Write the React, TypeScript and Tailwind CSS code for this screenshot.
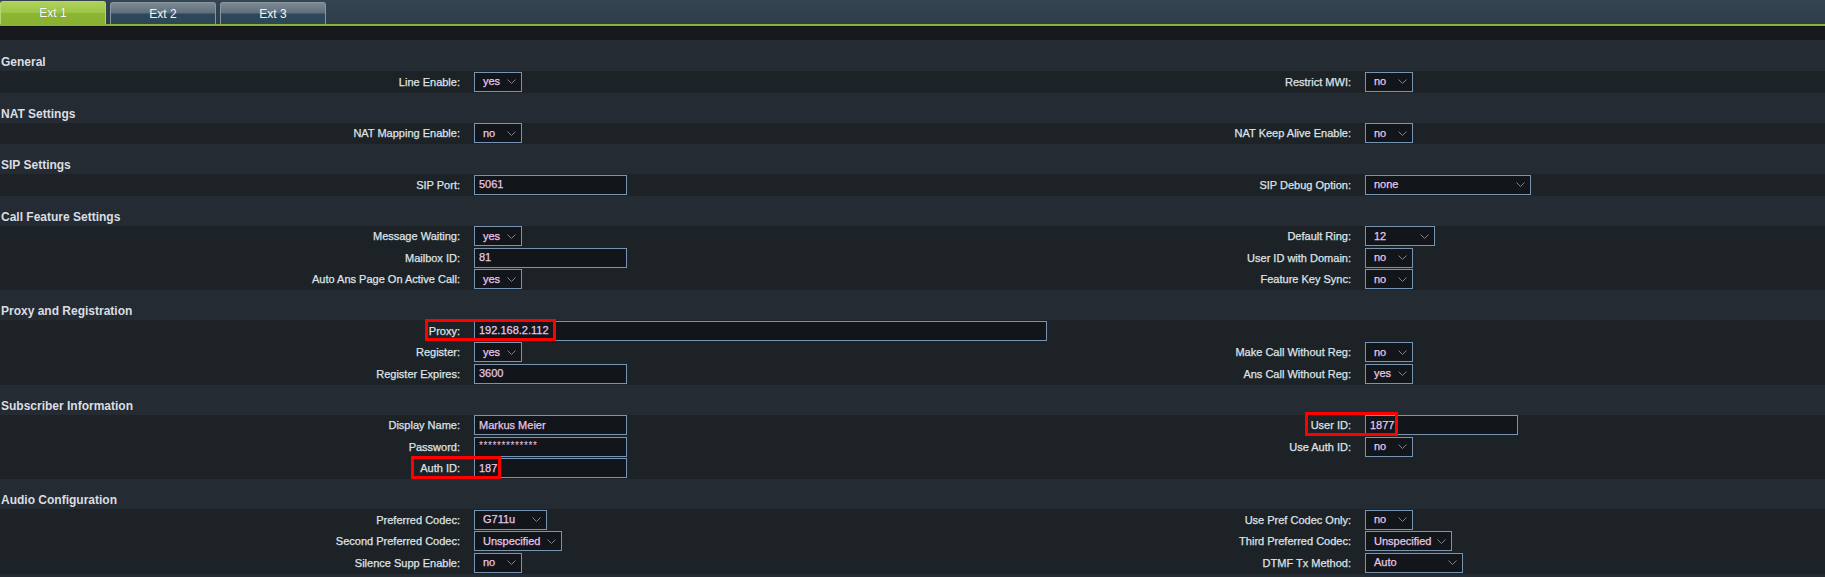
import React from "react";

// Ext 1 line settings page (phone web UI), dark theme
type Ctrl =
  | { kind: "select"; value: string; w: string }
  | { kind: "input"; value: string; w: string; pw?: boolean };

type Field = { label: string; ctrl: Ctrl };
type Row = { left: Field; right?: Field; mark?: "proxy" | "user" | "auth" };
type Section = { title: string; rows: Row[] };

const sel = (value: string, w = "w-[48px]"): Ctrl => ({ kind: "select", value, w });
const inp = (value: string, w = "w-[153px]", pw = false): Ctrl => ({ kind: "input", value, w, pw });

const sections: Section[] = [
  {
    title: "General",
    rows: [{ left: { label: "Line Enable:", ctrl: sel("yes") }, right: { label: "Restrict MWI:", ctrl: sel("no") } }],
  },
  {
    title: "NAT Settings",
    rows: [
      {
        left: { label: "NAT Mapping Enable:", ctrl: sel("no") },
        right: { label: "NAT Keep Alive Enable:", ctrl: sel("no") },
      },
    ],
  },
  {
    title: "SIP Settings",
    rows: [
      {
        left: { label: "SIP Port:", ctrl: inp("5061") },
        right: { label: "SIP Debug Option:", ctrl: sel("none", "w-[166px]") },
      },
    ],
  },
  {
    title: "Call Feature Settings",
    rows: [
      {
        left: { label: "Message Waiting:", ctrl: sel("yes") },
        right: { label: "Default Ring:", ctrl: sel("12", "w-[70px]") },
      },
      {
        left: { label: "Mailbox ID:", ctrl: inp("81") },
        right: { label: "User ID with Domain:", ctrl: sel("no") },
      },
      {
        left: { label: "Auto Ans Page On Active Call:", ctrl: sel("yes") },
        right: { label: "Feature Key Sync:", ctrl: sel("no") },
      },
    ],
  },
  {
    title: "Proxy and Registration",
    rows: [
      { left: { label: "Proxy:", ctrl: inp("192.168.2.112", "w-[573px]") }, mark: "proxy" },
      {
        left: { label: "Register:", ctrl: sel("yes") },
        right: { label: "Make Call Without Reg:", ctrl: sel("no") },
      },
      {
        left: { label: "Register Expires:", ctrl: inp("3600") },
        right: { label: "Ans Call Without Reg:", ctrl: sel("yes") },
      },
    ],
  },
  {
    title: "Subscriber Information",
    rows: [
      {
        left: { label: "Display Name:", ctrl: inp("Markus Meier") },
        right: { label: "User ID:", ctrl: inp("1877") },
        mark: "user",
      },
      {
        left: { label: "Password:", ctrl: inp("*************", "w-[153px]", true) },
        right: { label: "Use Auth ID:", ctrl: sel("no") },
      },
      { left: { label: "Auth ID:", ctrl: inp("187") }, mark: "auth" },
    ],
  },
  {
    title: "Audio Configuration",
    rows: [
      {
        left: { label: "Preferred Codec:", ctrl: sel("G711u", "w-[73px]") },
        right: { label: "Use Pref Codec Only:", ctrl: sel("no") },
      },
      {
        left: { label: "Second Preferred Codec:", ctrl: sel("Unspecified", "w-[88px]") },
        right: { label: "Third Preferred Codec:", ctrl: sel("Unspecified", "w-[87px]") },
      },
      {
        left: { label: "Silence Supp Enable:", ctrl: sel("no") },
        right: { label: "DTMF Tx Method:", ctrl: sel("Auto", "w-[98px]") },
      },
    ],
  },
];

function Chevron() {
  return (
    <svg width="9" height="5" viewBox="0 0 9 5" className="shrink-0">
      <path d="M0.5 0.5 L4.5 4.5 L8.5 0.5" fill="none" stroke="#7b848e" strokeWidth="1" />
    </svg>
  );
}

function Control({ c }: { c: Ctrl }) {
  if (c.kind === "select") {
    return (
      <div
        className={`${c.w} flex h-[20px] items-center justify-between border border-[#7795b3] bg-[#121519] pl-[8px] pr-[5px] text-[#e7c7e9]`}
      >
        <span className="leading-none [-webkit-text-stroke:0.25px]">{c.value}</span>
        <Chevron />
      </div>
    );
  }
  return (
    <div className={`${c.w} flex h-[20px] items-center border border-[#7795b3] bg-[#121519] pl-[4px] text-[#e7c7e9]`}>
      <span
        className={
          c.pw
            ? "text-[10px] leading-none tracking-[0.6px] -translate-y-[1px]"
            : "leading-none [-webkit-text-stroke:0.25px]"
        }
      >
        {c.value}
      </span>
    </div>
  );
}

function RedMark({ kind }: { kind: Row["mark"] }) {
  if (kind === "proxy")
    return <span className="pointer-events-none absolute left-[425px] top-[-1px] h-[22px] w-[131px] border-[3px] border-[#ff0000]" />;
  if (kind === "user")
    return <span className="pointer-events-none absolute left-[1305px] top-[-3px] h-[24px] w-[93px] border-[3px] border-[#ff0000]" />;
  if (kind === "auth")
    return <span className="pointer-events-none absolute left-[411px] top-[-2px] h-[23px] w-[90px] border-[3px] border-[#ff0000]" />;
  return null;
}

function FormRow({ row }: { row: Row }) {
  return (
    <div className="relative grid h-[21.5px] grid-cols-[460px_590px_301px_1fr] items-center bg-[#1d2227]">
      <div className="text-right text-[#dfe3e7] [-webkit-text-stroke:0.25px]">{row.left.label}</div>
      <div className="pl-[14px]">
        <Control c={row.left.ctrl} />
      </div>
      <div className="text-right text-[#dfe3e7] [-webkit-text-stroke:0.25px]">{row.right?.label}</div>
      <div className="pl-[14px]">{row.right && <Control c={row.right.ctrl} />}</div>
      <RedMark kind={row.mark} />
    </div>
  );
}

export default function App() {
  return (
    <div className="min-h-screen w-full overflow-hidden bg-[#252b32] font-['Liberation_Sans',Arial,sans-serif] text-[11px]">
      {/* tab strip */}
      <div className="flex h-[24px] items-end gap-[4px] bg-gradient-to-b from-[#35444f] to-[#2d3d4a]">
        <div className="flex h-[23px] w-[106px] items-center justify-center rounded-t-[3px] border-x border-t border-[#b5d56e] bg-[linear-gradient(to_bottom,#aed25a_0%,#9cc545_48%,#8db535_52%,#8ab230_100%)] text-[12px] text-white [text-shadow:0_0_1px_rgba(0,0,0,0.35)]">
          Ext 1
        </div>
        {["Ext 2", "Ext 3"].map((t) => (
          <div
            key={t}
            className="flex h-[22px] w-[106px] items-center justify-center rounded-t-[3px] border-x border-t border-[#8797a2] bg-[linear-gradient(to_bottom,#7a8994_0%,#5f6e79_48%,#2e4759_52%,#2c4658_100%)] text-[12px] text-[#f2f4f5]"
          >
            {t}
          </div>
        ))}
      </div>
      <div className="h-[2px] bg-[#8db23c]" />
      <div className="h-[14px] border-t border-[#121416] bg-[#171a1d]" />

      {/* settings */}
      <div className="pt-px">
        {sections.map((s) => (
          <div key={s.title}>
            <div className="flex h-[30px] items-end pb-[2px] pl-px text-[12px] font-bold leading-[14px] text-[#dadee2]">
              {s.title}
            </div>
            {s.rows.map((r, i) => (
              <FormRow key={i} row={r} />
            ))}
          </div>
        ))}
        <div className="h-[30px]" />
      </div>
    </div>
  );
}
